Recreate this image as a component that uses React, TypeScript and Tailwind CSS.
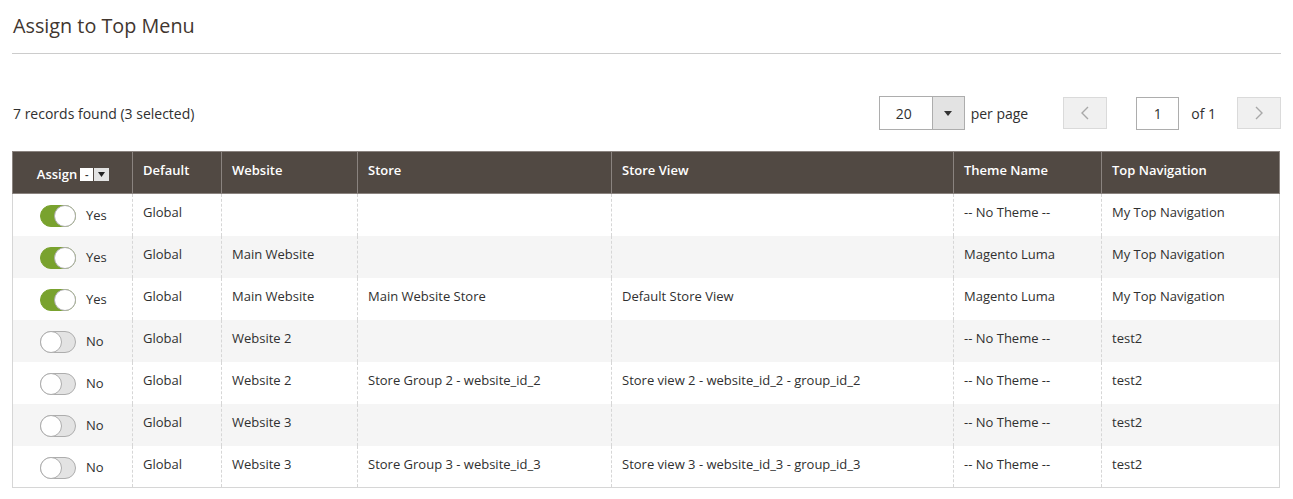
const rows = [
  { on: true, website: '', store: '', view: '', theme: '-- No Theme --', nav: 'My Top Navigation' },
  { on: true, website: 'Main Website', store: '', view: '', theme: 'Magento Luma', nav: 'My Top Navigation' },
  { on: true, website: 'Main Website', store: 'Main Website Store', view: 'Default Store View', theme: 'Magento Luma', nav: 'My Top Navigation' },
  { on: false, website: 'Website 2', store: '', view: '', theme: '-- No Theme --', nav: 'test2' },
  { on: false, website: 'Website 2', store: 'Store Group 2 - website_id_2', view: 'Store view 2 - website_id_2 - group_id_2', theme: '-- No Theme --', nav: 'test2' },
  { on: false, website: 'Website 3', store: '', view: '', theme: '-- No Theme --', nav: 'test2' },
  { on: false, website: 'Website 3', store: 'Store Group 3 - website_id_3', view: 'Store view 3 - website_id_3 - group_id_3', theme: '-- No Theme --', nav: 'test2' },
];

const heads = ['Default', 'Website', 'Store', 'Store View', 'Theme Name', 'Top Navigation'];

function Toggle({ on }: { on: boolean }) {
  return (
    <span
      className={
        'relative inline-block w-[36px] h-[22px] rounded-full border ' +
        (on ? 'bg-[#79a22e] border-[#79a22e]' : 'bg-[#e3e3e3] border-[#adadad]')
      }
    >
      <span
        className={
          'absolute top-[-1px] w-[22px] h-[22px] rounded-full bg-white border border-[#adadad] ' +
          (on ? 'right-[-1px]' : 'left-[-1px]')
        }
      />
    </span>
  );
}

function Chevron({ dir }: { dir: 'left' | 'right' }) {
  return (
    <svg width="8" height="14" viewBox="0 0 8 14" fill="none" stroke="#a8a8a8" strokeWidth="1.4">
      {dir === 'left' ? <path d="M7 1 1 7l6 6" /> : <path d="M1 1l6 6-6 6" />}
    </svg>
  );
}

export default function App() {
  return (
    <div className="bg-white px-3 font-['Open_Sans',sans-serif] text-[#303030]">
      <div className="pt-[13px] pb-[14px] border-b border-[#cccccc]">
        <h2 className="text-[19.8px] leading-[26px] text-[#41362f] pl-[1px]">Assign to Top Menu</h2>
      </div>

      <div className="flex items-center justify-between mt-[42px] h-[34px]">
        <div className="text-[14px] pl-[1px]">7 records found (3 selected)</div>
        <div className="flex items-center text-[14px]">
          <div className="flex h-[34px] w-[86px] border border-[#adadad]">
            <div className="flex-1 flex items-center pl-[16px]">20</div>
            <div className="w-[32px] bg-[#e3e3e3] border-l border-[#adadad] flex items-center justify-center">
              <svg width="8" height="5" viewBox="0 0 8 5"><path d="M0 0h8L4 5z" fill="#333" /></svg>
            </div>
          </div>
          <span className="ml-[6px]">per page</span>
          <button className="ml-[35px] w-[44px] h-[32px] bg-[#f0f0f0] border border-[#dadada] flex items-center justify-center">
            <Chevron dir="left" />
          </button>
          <div className="ml-[29px] w-[43px] h-[33px] border border-[#adadad] flex items-center justify-center">1</div>
          <span className="ml-[12px]">of 1</span>
          <button className="ml-[21px] w-[44px] h-[32px] bg-[#f0f0f0] border border-[#dadada] flex items-center justify-center">
            <Chevron dir="right" />
          </button>
        </div>
      </div>

      <table className="mt-[21px] w-[1267px] table-fixed border-collapse text-[13px] border border-[#d6d6d6]">
        <colgroup>
          <col className="w-[120px]" />
          <col className="w-[89px]" />
          <col className="w-[136px]" />
          <col className="w-[254px]" />
          <col className="w-[342px]" />
          <col className="w-[148px]" />
          <col className="w-[178px]" />
        </colgroup>
        <thead>
          <tr className="h-[42px] bg-[#514943] text-white font-semibold">
            <th className="border border-[#8a837f] align-top pt-[13px] text-center font-semibold">
              <span className="inline-flex items-center gap-[3px] pl-[1px]">
                Assign
                <span className="inline-flex h-[13px]">
                  <span className="w-[13px] bg-white text-[#303030] text-[11px] leading-[13px] text-center">-</span>
                  <span className="w-[15px] bg-[#e3e3e3] flex items-center justify-center ml-[1px]">
                    <svg width="7" height="5" viewBox="0 0 7 5"><path d="M0 0h7L3.5 5z" fill="#222" /></svg>
                  </span>
                </span>
              </span>
            </th>
            {heads.map((h) => (
              <th key={h} className="border border-[#8a837f] align-top pt-[9px] px-[10px] text-left font-semibold">
                {h}
              </th>
            ))}
          </tr>
        </thead>
        <tbody>
          {rows.map((r, i) => (
            <tr key={i} className={'h-[42px] ' + (i % 2 ? 'bg-[#f5f5f5]' : 'bg-white')}>
              <td className="border-r border-dashed border-[#d6d6d6] align-top pt-[11px] pl-[27px]">
                <div className="flex items-center gap-[10px]">
                  <Toggle on={r.on} />
                  <span>{r.on ? 'Yes' : 'No'}</span>
                </div>
              </td>
              {['Global', r.website, r.store, r.view, r.theme, r.nav].map((c, j) => (
                <td key={j} className="border-l border-r border-dashed border-[#d6d6d6] align-top pt-[9px] px-[10px]">
                  {c}
                </td>
              ))}
            </tr>
          ))}
        </tbody>
      </table>
    </div>
  );
}
